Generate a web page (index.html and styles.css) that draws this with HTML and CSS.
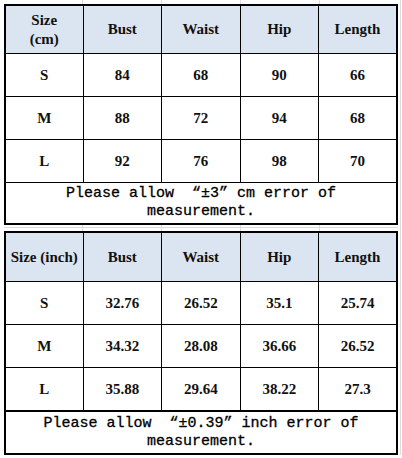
FILE: index.html
```html
<!DOCTYPE html>
<html lang="en">
<head>
    <meta charset="UTF-8">
    <meta name="viewport" content="width=device-width, initial-scale=1.0">
    <title>Size Chart</title>
    <link rel="stylesheet" href="styles.css">
</head>
<body>
    <table class="size-table cm">
        <colgroup>
            <col class="col-size">
            <col><col><col><col>
        </colgroup>
        <tr class="head">
            <td>Size<br>(cm)</td>
            <td>Bust</td>
            <td>Waist</td>
            <td>Hip</td>
            <td>Length</td>
        </tr>
        <tr><td>S</td><td>84</td><td>68</td><td>90</td><td>66</td></tr>
        <tr><td>M</td><td>88</td><td>72</td><td>94</td><td>68</td></tr>
        <tr><td>L</td><td>92</td><td>76</td><td>98</td><td>70</td></tr>
        <tr class="note">
            <td colspan="5">Please allow&nbsp; “±3”&nbsp;cm error of<br>measurement.</td>
        </tr>
    </table>

    <div class="sheet-gap"></div>

    <table class="size-table inch">
        <colgroup>
            <col class="col-size">
            <col><col><col><col>
        </colgroup>
        <tr class="head">
            <td>Size (inch)</td>
            <td>Bust</td>
            <td>Waist</td>
            <td>Hip</td>
            <td>Length</td>
        </tr>
        <tr><td>S</td><td>32.76</td><td>26.52</td><td>35.1</td><td>25.74</td></tr>
        <tr><td>M</td><td>34.32</td><td>28.08</td><td>36.66</td><td>26.52</td></tr>
        <tr class="last"><td>L</td><td>35.88</td><td>29.64</td><td>38.22</td><td>27.3</td></tr>
        <tr class="note">
            <td colspan="5">Please allow&nbsp; “±0.39”&nbsp;inch error of<br>measurement.</td>
        </tr>
    </table>
</body>
</html>
```

FILE: styles.css
```css
body {
    margin: 0;
    padding: 4px 4px 0 4px;
    background-color: #fff;
    background-image:
        linear-gradient(#dcdcdc, #dcdcdc),
        linear-gradient(#dcdcdc, #dcdcdc),
        linear-gradient(#dcdcdc, #dcdcdc),
        linear-gradient(#dcdcdc, #dcdcdc),
        linear-gradient(#dcdcdc, #dcdcdc);
    background-size: 1px 100%;
    background-position: 82px 0, 161px 0, 240px 0, 319px 0, 400px 0;
    background-repeat: no-repeat;
    font-family: 'Liberation Serif', 'Times New Roman', serif;
    color: #111;
}

.size-table {
    width: 394px;
    border-collapse: collapse;
    table-layout: fixed;
    border: 2px solid #000;
    background-color: #fff;
}

.col-size {
    width: 78px;
}

.size-table td {
    border: 1px solid #000;
    padding: 0;
    text-align: center;
    vertical-align: middle;
    font-size: 15px;
    font-weight: bold;
    line-height: 19px;
    height: 42px;
}

.size-table .head td {
    background-color: #dbe5f1;
    height: 47px;
}

.size-table .note td {
    font-family: 'Liberation Mono', 'Courier New', monospace;
    font-weight: normal;
    font-size: 15px;
    line-height: 18px;
    height: 40px;
    padding: 0 2px;
    color: #000;
    -webkit-text-stroke: 0.3px #000;
}

.inch .head td {
    height: 48px;
}

.inch .last td {
    border-bottom: 2px solid #000;
}

.inch .note td {
    height: 41px;
}

.sheet-gap {
    height: 6px;
    background: linear-gradient(#dcdcdc, #dcdcdc) 0 2px / 100% 1px no-repeat;
}
```
